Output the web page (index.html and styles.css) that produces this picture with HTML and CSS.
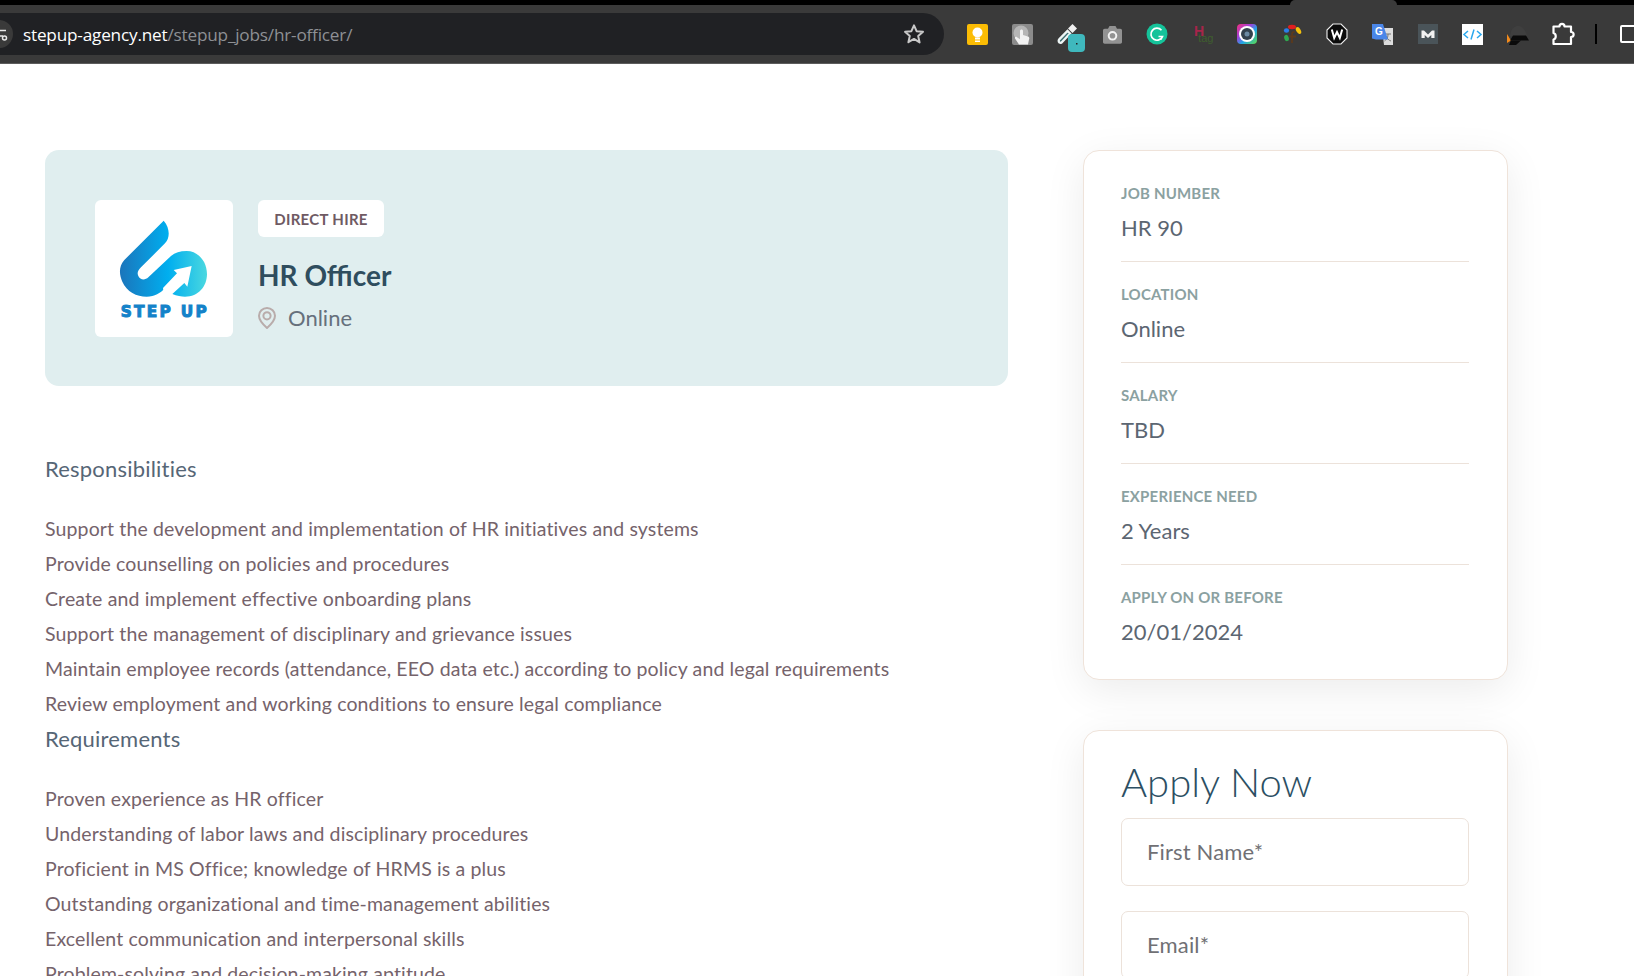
FILE: index.html
```html
<!DOCTYPE html>
<html lang="en">
<head>
<meta charset="utf-8">
<title>HR Officer</title>
<link rel="stylesheet" href="styles.css">
</head>
<body>
<header class="browser">
  <div class="tabstrip"><div class="tab"></div></div>
  <div class="toolbar">
    <div class="address">
      <svg class="chip" viewBox="0 0 13 28"><circle cx="-1" cy="14" r="14" fill="#3a3a3a"/><path d="M-2 10.500H6M-2 16H3" stroke="#e8e8e8" stroke-width="1.600"/><circle cx="4.500" cy="18" r="2" fill="none" stroke="#e8e8e8" stroke-width="1.500"/></svg>
      <span class="url"><span class="url-host">stepup-agency.net</span>/stepup_jobs/hr-officer/</span>
      <svg class="star" viewBox="0 0 24 24"><path d="M12 3.300l2.600 5.900 6.400.6-4.800 4.300 1.400 6.300L12 16.900l-5.600 3.300 1.400-6.300L3 9.800l6.400-.6z" fill="none" stroke="#c8c8c8" stroke-width="2" stroke-linejoin="round"/></svg>
    </div>
    <div class="extensions">
      <svg class="ic" viewBox="0 0 24 24"><rect x="2" y="2" width="21" height="21" rx="2" fill="#fbbc04"/><circle cx="12.500" cy="10.500" r="5" fill="#fff"/><rect x="10" y="15.500" width="5" height="2" fill="#fff"/><rect x="10" y="18.500" width="5" height="1.500" fill="#fff"/></svg>
      <svg class="ic" viewBox="0 0 24 24"><rect x="2" y="2" width="21" height="21" rx="2" fill="#8b8b8b"/><circle cx="11" cy="11" r="7.500" fill="#b5b5b5"/><path d="M10 9c0-2 3-2 3 0v4l5 1.500c1.500.5 1.500 2 1 3l-1 5H9l-4-6c-.7-1.300 1-2.300 2-1.300l3 2z" fill="#f1f1f1"/></svg>
      <svg class="ic" viewBox="0 0 24 24"><path d="M4.500 20.500c-1.200-1-1-2.200 0-3.400L12.500 9l2.500 2.500-7.700 8.300c-.9 1.100-1.900 1.500-2.800.7z" fill="#3f6f72" stroke="#eef6f6" stroke-width="2.300"/><path d="M13 6.500L17.500 2l4.500 4.500L17.500 11z" fill="#f0f0f0"/><rect x="13" y="12" width="17" height="18" rx="4" fill="#3fb8bd"/><rect x="21" y="21" width="1.500" height="1.500" fill="#222"/></svg>
      <svg class="ic" viewBox="0 0 24 24"><path d="M3 8.500c0-1 .7-1.700 1.700-1.700H8L9.500 4h6L17 6.800h3.300c1 0 1.700.7 1.700 1.700V20c0 1-.7 1.700-1.700 1.700H4.700C3.700 21.700 3 21 3 20z" fill="#929292"/><circle cx="12.500" cy="13.800" r="3.800" fill="none" stroke="#f2f2f2" stroke-width="2"/></svg>
      <svg class="ic" viewBox="0 0 24 24"><circle cx="12" cy="12" r="10.500" fill="#15c39a"/><path d="M16.500 8.300A6 6 0 1 0 17.500 14.500h-4M17.500 14.500l-1.800 3" fill="none" stroke="#fff" stroke-width="1.700"/></svg>
      <svg class="ic" viewBox="0 0 24 24"><text x="4" y="14"><tspan class="tag-h">H</tspan><tspan class="tag-t" dx="-6" dy="6">tag</tspan></text></svg>
      <svg class="ic" viewBox="0 0 24 24"><defs><linearGradient id="rb" x1="0" y1="0" x2="1" y2="1"><stop offset="0" stop-color="#f5317f"/><stop offset=".35" stop-color="#a33fd8"/><stop offset=".6" stop-color="#21a6e8"/><stop offset="1" stop-color="#5fdc4a"/></linearGradient></defs><rect x="2" y="2" width="20" height="20" rx="4" fill="url(#rb)"/><circle cx="12" cy="12" r="8" fill="#fff"/><circle cx="12" cy="12" r="6" fill="#33424d"/><circle cx="12" cy="12" r="2.500" fill="#6c8ba3"/></svg>
      <svg class="ic" viewBox="0 0 24 24"><path d="M12 21V12c0-1.500.8-2.200 2.500-2.200M9 14.500h7" fill="none" stroke="#5d3a1c" stroke-width="1.800"/><ellipse cx="12" cy="5" rx="4" ry="2.200" fill="#e01f1f"/><ellipse cx="18.500" cy="8.500" rx="2.200" ry="3.800" transform="rotate(-30 18.500 8.500)" fill="#f4c20d"/><ellipse cx="6.500" cy="8.500" rx="2.600" ry="2.200" fill="#2b7de9"/><ellipse cx="6.500" cy="16" rx="2.300" ry="3.200" transform="rotate(-15 6.500 16)" fill="#2fa84f"/></svg>
      <svg class="ic" viewBox="0 0 24 24"><path d="M8 2h8l6 6v8l-6 6H8l-6-6V8z" fill="#0b0b0b" stroke="#f0f0f0" stroke-width="1.100"/><path d="M6.800 7.500L9.200 16l2.800-6 2.800 6 2.400-8.500" fill="none" stroke="#fff" stroke-width="2"/></svg>
      <svg class="ic" viewBox="0 0 24 24"><path d="M12 6h11v17H14z" fill="#dcdcdc"/><path d="M15 12h6M18 12v1c0 3-2 5-3.500 6M16 14c1 2.500 3 4.500 5 5" fill="none" stroke="#777" stroke-width="1"/><path d="M2 2h11l5 15.500H6l-4-1z" fill="#4a86e8"/><text class="gt" x="5" y="13">G</text></svg>
      <svg class="ic" viewBox="0 0 24 24"><rect x="3" y="2" width="20" height="20" fill="#4a5459"/><path d="M6.500 16V8.500h2.500l4 4 4-4h2.500V16h-3.200v-3l-3.300 3-3.300-3v3z" fill="#f2f2f2"/></svg>
      <svg class="ic" viewBox="0 0 24 24"><rect x="2" y="2" width="21" height="21" fill="#fff"/><path d="M8 9l-4 3.500 4 3.500M17 9l4 3.500-4 3.500M14 7.500l-3 10" fill="none" stroke="#2aa8ee" stroke-width="1.500"/></svg>
      <svg class="ic" viewBox="0 0 24 24"><path d="M5 14C6 6 10 4 13 4s7 2 9 10z" fill="#3f3f3f"/><path d="M2 12v9l4-2.500z" fill="#f28a1c"/><path d="M5 18.500L8 13.500h13l3 5z" fill="#0a0a0a"/><path d="M4 23l2-4.500h10l-5 4.500z" fill="#0a0a0a"/></svg>
      <svg class="ic" viewBox="0 0 24 24"><path d="M9.500 4.500c0-3.500 5-3.500 5 0H21v5.500c3.500 0 3.500 5 0 5V22H3.500v-4.500c3-1 3-5.500 0-6.500V4.500z" fill="none" stroke="#fff" stroke-width="2.200" stroke-linejoin="round"/></svg>
    </div>
    <div class="tool-sep"></div>
    <div class="side-panel"></div>
  </div>
</header>

<main class="page">
  <section class="content">
    <div class="hero">
      <div class="logo">
        <svg class="logo-svg" viewBox="30 30 414 411">
          <defs><linearGradient id="lg" x1="105" y1="0" x2="366" y2="0" gradientUnits="userSpaceOnUse"><stop offset="0" stop-color="#1b75bb"/><stop offset=".55" stop-color="#00aeef"/><stop offset="1" stop-color="#4ad8e0"/></linearGradient></defs>
          <path d="M236 92L118 210C100 230 103 255 112 275C125 305 155 320 185 320C210 320 225 310 240 295L262 312C275 318 290 320 300 320C340 320 366 290 366 252C366 215 340 183 305 183C285 183 270 188 258 198L190 262C180 272 165 270 160 258C155 248 160 240 168 232L240 160C255 145 256 115 236 92Z" fill="url(#lg)"/>
          <path d="M320 228L266 240L276 250L234 294L240 330H262V312L298 279L307 290Z" fill="#fff"/>
          <text class="logo-text" x="107" y="380" textLength="258" lengthAdjust="spacing">STEP UP</text>
        </svg>
      </div>
      <div class="hero-info">
        <span class="badge">DIRECT HIRE</span>
        <h1 class="job-title">HR Officer</h1>
        <div class="job-loc">
          <svg class="pin" viewBox="0 0 18 22"><path d="M9 1C4.600 1 1 4.500 1 8.800 1 14 9 21 9 21s8-7 8-12.200C17 4.500 13.400 1 9 1z" fill="none" stroke="#b9acab" stroke-width="2"/><circle cx="9" cy="8.800" r="3.600" fill="none" stroke="#b9acab" stroke-width="2"/></svg>
          <span>Online</span>
        </div>
      </div>
    </div>

    <div class="details">
      <h2 class="sec-title sec-first">Responsibilities</h2>
      <ul class="sec-list">
        <li>Support the development and implementation of HR initiatives and systems</li>
        <li>Provide counselling on policies and procedures</li>
        <li>Create and implement effective onboarding plans</li>
        <li>Support the management of disciplinary and grievance issues</li>
        <li>Maintain employee records (attendance, EEO data etc.) according to policy and legal requirements</li>
        <li>Review employment and working conditions to ensure legal compliance</li>
      </ul>
      <h2 class="sec-title">Requirements</h2>
      <ul class="sec-list">
        <li>Proven experience as HR officer</li>
        <li>Understanding of labor laws and disciplinary procedures</li>
        <li>Proficient in MS Office; knowledge of HRMS is a plus</li>
        <li>Outstanding organizational and time-management abilities</li>
        <li>Excellent communication and interpersonal skills</li>
        <li>Problem-solving and decision-making aptitude</li>
      </ul>
    </div>
  </section>

  <aside class="sidebar">
    <div class="card summary">
      <div class="row"><div class="row-label">JOB NUMBER</div><div class="row-value">HR 90</div></div>
      <div class="row"><div class="row-label">LOCATION</div><div class="row-value">Online</div></div>
      <div class="row"><div class="row-label">SALARY</div><div class="row-value">TBD</div></div>
      <div class="row"><div class="row-label">EXPERIENCE NEED</div><div class="row-value">2 Years</div></div>
      <div class="row"><div class="row-label">APPLY ON OR BEFORE</div><div class="row-value">20/01/2024</div></div>
    </div>
    <form class="card apply">
      <h2 class="apply-title">Apply Now</h2>
      <input class="field" type="text" placeholder="First Name*">
      <input class="field" type="email" placeholder="Email*">
    </form>
  </aside>
</main>
</body>
</html>
```

FILE: styles.css
```css
* { box-sizing: border-box; }
html, body { margin: 0; height: 976px; overflow: hidden; background: #fff; }
body { font-family: "Lato", "Noto Sans", sans-serif; color: #75636b; }

.browser { height: 64px; background: #3a3a3a; border-bottom: 1px solid #5c5c5c; overflow: hidden; }
.tabstrip { height: 5px; background: #000; }
.tab { width: 107px; height: 5px; margin-left: 1290px; background: #3a3a3a; border-radius: 14px 14px 0 0; }
.toolbar { display: flex; align-items: center; height: 42px; margin-top: 8px; }
.address { flex: none; display: flex; align-items: center; width: 944px; height: 42px; background: #202124; border-radius: 0 21px 21px 0; }
.chip { flex: none; width: 13px; height: 28px; }
.url { margin-left: 10px; font-family: "Open Sans", sans-serif; font-size: 17.2px; letter-spacing: -0.2px; color: #8e9094; white-space: nowrap; }
.url-host { color: #fff; }
.star { flex: none; width: 24px; height: 24px; margin-left: auto; margin-right: 18px; }
.extensions { flex: none; display: flex; gap: 21px; margin-left: 21px; }
.ic { flex: none; display: block; width: 24px; height: 24px; overflow: visible; }
.tag-h { font: 700 14px "Liberation Sans", sans-serif; fill: #a8254a; }
.tag-t { font: 400 11px "Liberation Sans", sans-serif; fill: #3f5f2e; }
.gt { font: 700 10px "Liberation Sans", sans-serif; fill: #fff; }
.tool-sep { flex: none; width: 2px; height: 20px; margin-left: 21px; background: #000; }
.side-panel { flex: none; width: 20px; height: 18px; margin-left: 23px; border: 2px solid #fff; border-radius: 2px; }

.page { display: grid; grid-template-columns: 963px 425px; column-gap: 75px; align-items: start; padding: 86px 0 0 45px; }

.hero { display: flex; gap: 25px; height: 236px; padding: 50px; background: #e0eeef; border-radius: 14px; }
.logo { flex: none; width: 138px; height: 137px; background: #fff; border-radius: 6px; }
.logo-svg { display: block; width: 138px; height: 137px; }
.logo-text { font: 700 46px "DejaVu Sans", sans-serif; fill: #1482c9; stroke: #1482c9; stroke-width: 3px; }
.hero-info { display: flex; flex-direction: column; align-items: flex-start; }
.badge { display: flex; align-items: center; justify-content: center; width: 126px; height: 37px; background: #fff; border-radius: 6px; font-size: 15px; font-weight: 700; letter-spacing: 0.3px; color: #6f5a63; }
.job-title { margin: 20px 0 0; font-size: 28px; line-height: 36px; font-weight: 700; color: #2f4d5e; }
.job-loc { display: flex; align-items: center; gap: 12px; margin-top: 10px; font-size: 22px; line-height: 30px; color: #66707c; }
.pin { flex: none; width: 18px; height: 22px; }

.sec-title { margin: 0 0 25px; font-size: 22px; line-height: 35px; font-weight: 400; letter-spacing: 0.2px; color: #566676; }
.sec-first { margin-top: 65px; }
.sec-list { margin: 0; padding: 0; list-style: none; font-size: 19.5px; line-height: 35px; letter-spacing: 0.13px; white-space: nowrap; }

.card { background: #fff; border: 1px solid #efe3da; border-radius: 16px; box-shadow: 0 10px 40px rgba(0, 0, 0, 0.08); }
.summary { padding: 10px 38px 14px 37px; }
.row { padding: 20px 0 18px; border-bottom: 1px solid #ece2da; }
.row:last-child { border-bottom: 0; }
.row-label { font-size: 15px; line-height: 24px; font-weight: 700; letter-spacing: 0.2px; color: #8ba1a1; }
.row-value { margin-top: 8px; font-size: 22px; line-height: 30px; color: #5c6672; }
.apply { margin-top: 50px; padding: 28px 38px 60px 37px; }
.apply-title { margin: 0 0 13px; font-size: 40px; line-height: 46px; font-weight: 300; color: #2c4f63; }
.field { display: block; width: 100%; height: 68px; margin-bottom: 25px; padding: 0 25px 2px; background: #fff; border: 1px solid #ece2da; border-radius: 7px; font: 400 22px "Lato", sans-serif; letter-spacing: 0.15px; color: #6f6f73; outline: 0; }
.field::placeholder { color: #707074; opacity: 1; }
```
